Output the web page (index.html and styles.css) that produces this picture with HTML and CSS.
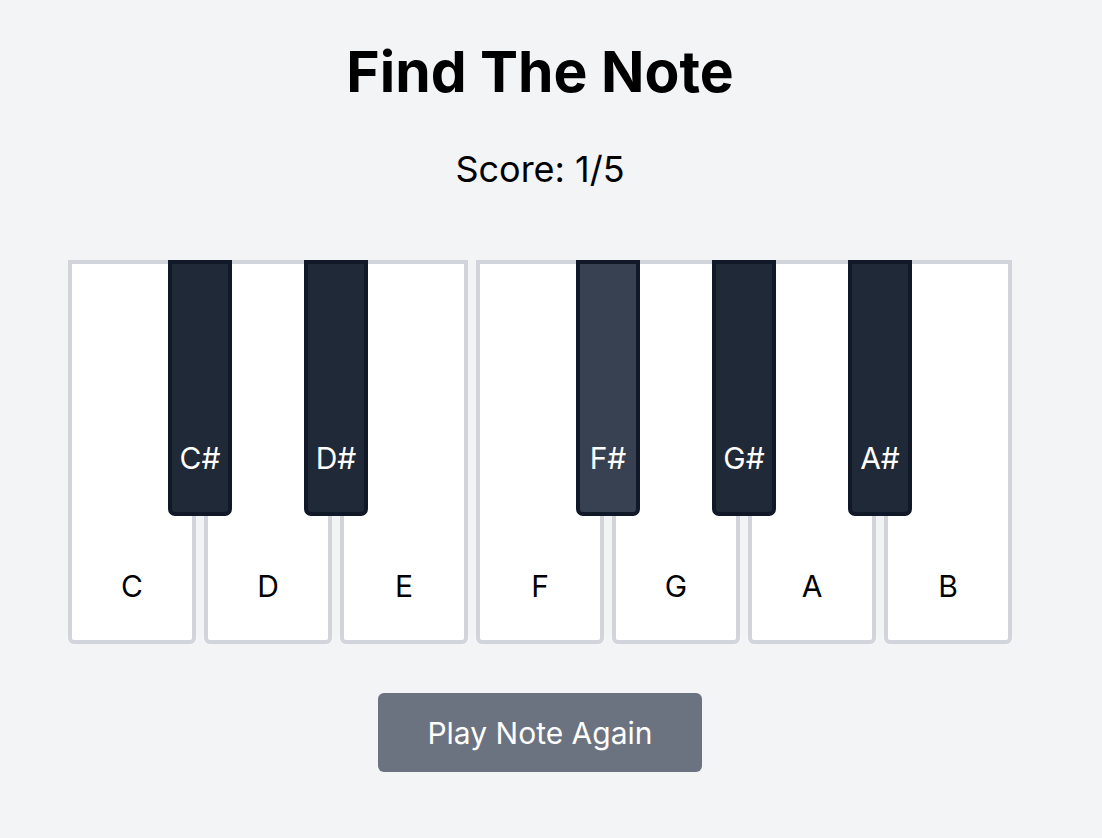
FILE: index.html
```html
<!DOCTYPE html>
<html lang="en">
<head>
<meta charset="utf-8">
<title>Find The Note</title>
<link rel="stylesheet" href="styles.css">
</head>
<body>
<main class="page">
  <h1 class="title">Find The Note</h1>
  <p class="score">Score: 1/5</p>
  <div class="keyboard">
    <div class="white-key"><span class="label">C</span></div>
    <div class="white-key"><span class="label">D</span></div>
    <div class="white-key"><span class="label">E</span></div>
    <div class="white-key"><span class="label">F</span></div>
    <div class="white-key"><span class="label">G</span></div>
    <div class="white-key"><span class="label">A</span></div>
    <div class="white-key"><span class="label">B</span></div>
    <div class="black-key k-cs"><span class="label">C#</span></div>
    <div class="black-key k-ds"><span class="label">D#</span></div>
    <div class="black-key k-fs active"><span class="label">F#</span></div>
    <div class="black-key k-gs"><span class="label">G#</span></div>
    <div class="black-key k-as"><span class="label">A#</span></div>
  </div>
  <button class="play-btn" type="button">Play Note Again</button>
</main>
</body>
</html>
```

FILE: styles.css
```css
* {
  box-sizing: border-box;
}

html, body {
  margin: 0;
  padding: 0;
  background: #f3f4f6;
}

body {
  font-family: Inter, "Noto Sans", "Liberation Sans", sans-serif;
  color: #000;
  min-height: 838px;
}

.page {
  width: 1080px;
  display: flex;
  flex-direction: column;
  align-items: center;
}

.title {
  margin: 37px 0 0;
  font-size: 57px;
  line-height: 70px;
  font-weight: 700;
}

.score {
  margin: 42px 0 0;
  font-size: 36px;
  line-height: 40px;
  font-weight: 400;
}

.keyboard {
  position: relative;
  margin-top: 71px;
  display: flex;
  gap: 8px;
}

.white-key {
  width: 128px;
  height: 384px;
  background: #fff;
  border: 4px solid #d1d5db;
  border-radius: 0 0 6px 6px;
  display: flex;
  align-items: flex-end;
  justify-content: center;
  padding-bottom: 36px;
}

.label {
  font-size: 30px;
  line-height: 36px;
}

.black-key {
  position: absolute;
  top: 0;
  width: 64px;
  height: 256px;
  background: #1f2937;
  border: 4px solid #111827;
  border-radius: 0 0 7px 7px;
  display: flex;
  align-items: flex-end;
  justify-content: center;
  padding-bottom: 36px;
  color: #fff;
  z-index: 2;
}

.black-key.active {
  background: #374151;
}

.k-cs { left: 100px; }
.k-ds { left: 236px; }
.k-fs { left: 508px; }
.k-gs { left: 644px; }
.k-as { left: 780px; }

.play-btn {
  margin-top: 49px;
  width: 324px;
  height: 79px;
  border: none;
  border-radius: 6px;
  background: #6b7280;
  color: #fff;
  font-family: inherit;
  font-size: 30px;
  line-height: 36px;
  padding: 0;
}
```
